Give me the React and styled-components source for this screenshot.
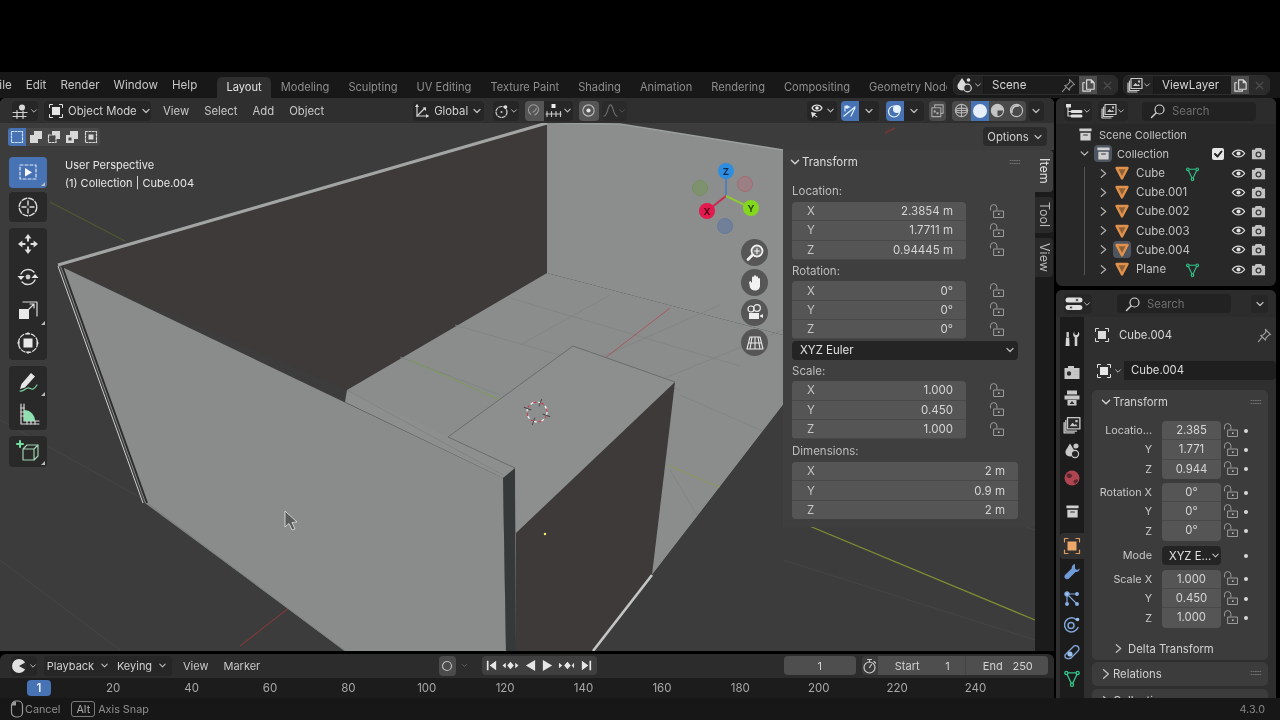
import React from "react";
import styled, { createGlobalStyle } from "styled-components";

const Global = createGlobalStyle`
  html, body { margin: 0; padding: 0; background: #000; overflow: hidden; }
  * { box-sizing: border-box; }
  #root { width: 1280px; height: 720px; }
`;

const Page = styled.div`
  width: 1280px; height: 720px; display: flex; flex-direction: column; background: #000;
  font-family: Inter, "Noto Sans", sans-serif; font-size: 11.3px; color: #c8c8c8;
  filter: blur(0.35px); overflow: hidden;
`;
const Letterbox = styled.div`height: 72px; flex: none; background: #000;`;

/* ---------- generic icon ---------- */
const Svg = styled.svg`
  width: ${p => p.$s || 16}px; height: ${p => p.$h || p.$s || 16}px; flex: none; display: block;
  fill: none; stroke: ${p => p.$c || "currentColor"}; stroke-width: ${p => p.$w || 1.2}; stroke-linecap: round; stroke-linejoin: round;
`;
const I = ({ s, h, c, w, vb = "0 0 16 16", children }) => <Svg $s={s} $h={h} $c={c} $w={w} viewBox={vb}>{children}</Svg>;
const F = p => <path fill={p.c || "currentColor"} stroke="none" {...p} />;

const Chevron = ({ s = 10, c = "#bdbdbd" }) => <I s={s} c={c} vb="0 0 10 10"><path d="M2 3.5l3 3 3-3" /></I>;
const ChevronR = ({ s = 10, c = "#a8a8a8" }) => <I s={s} c={c} vb="0 0 10 10"><path d="M3 1.5l4 3.5-4 3.5" /></I>;
const ViewportIco = () => <I s={18} c="#d0d0d0" vb="0 0 18 16"><circle cx="10" cy="4.4" r="3" fill="#d8d8d8" stroke="none" /><path d="M1 9.5h14M1 13.5h13M5 7.5v8M11 8v7.5" /></I>;
const ObjIco = ({ s = 16, c = "#e6e6e6" }) => <I s={s} c={c} w={1}><path d="M1.5 4.5v-3h3M11.5 1.5h3v3M14.5 11.5v3h-3M4.5 14.5h-3v-3" /><rect x="4" y="4" width="8" height="8" fill={c} stroke="none" /></I>;
const SelNew = () => <I s={14} c="#cfe0ff" vb="0 0 14 14"><rect x="1.5" y="1.5" width="11" height="11" strokeDasharray="2 1.4" /></I>;
const SelAdd = () => <I s={14} vb="0 0 14 14"><F d="M1 5h8v8H1zM5 1h8v8H5z" c="#d8d8d8" /></I>;
const SelSub = () => <I s={14} c="#d8d8d8" vb="0 0 14 14"><rect x="1.5" y="5" width="7.5" height="7.5" strokeDasharray="2 1.4" /><F d="M5 1h8v8H9V5H5z" c="#d8d8d8" /></I>;
const SelXor = () => <I s={14} c="#d8d8d8" vb="0 0 14 14"><F d="M5 1h8v8H9V5H5zM1 5h8v8H1V5zm2.5 2.5v3h3v-3z" c="#d8d8d8" /></I>;
const SelAnd = () => <I s={14} c="#d8d8d8" vb="0 0 14 14"><rect x="1.5" y="1.5" width="11" height="11" strokeDasharray="2 1.4" /><rect x="4.5" y="4.5" width="5" height="5" fill="#d8d8d8" stroke="none" /></I>;

const ToolSelect = () => <I s={24} c="#dfe8f6" vb="0 0 24 24"><rect x="4" y="5" width="16" height="14" strokeDasharray="3 2" /><F d="M9 8l7 4.5-7 4z" c="#fff" /></I>;
const ToolCursor = () => <I s={24} c="#dcdcdc" vb="0 0 24 24" w={1.4}><circle cx="12" cy="12" r="8.8" strokeDasharray="5 2" /><path d="M12 6v4M12 14v4M6 12h4M14 12h4" /></I>;
const ToolMove = () => <I s={24} vb="0 0 24 24"><F c="#e0e0e0" d="M12 2l3.4 4.4h-2.4v3h-2v-3H8.600zM12 22l3.4-4.400h-2.400v-3h-2v3H8.600zM2 12l4.400-3.400v2.400h3v2h-3v2.400zM22 12l-4.400-3.400v2.400h-3v2h3v2.400z" /></I>;
const ToolRotate = () => <I s={24} c="#dcdcdc" vb="0 0 24 24" w={1.4}><path d="M5 9a8 8 0 0 1 13-2M19 15a8 8 0 0 1-13 2" /><circle cx="12" cy="12" r="2.4" fill="#ccc" stroke="none" /><F c="#e6e6e6" d="M1.500 11l3.500 4 3.500-4zM15.500 13l3.500-4 3.500 4z" /></I>;
const ToolScale = () => <I s={24} c="#dcdcdc" vb="0 0 24 24"><path d="M7 4h14v14" /><rect x="3" y="11" width="10" height="10" fill="#e8e8e8" stroke="none" /><path d="M13 11l5-5M14 6h4v4" /></I>;
const ToolXform = () => <I s={24} c="#dcdcdc" vb="0 0 24 24" w={1.3}><circle cx="12" cy="12" r="9.500" strokeDasharray="4 2" /><rect x="7.500" y="7.500" width="9" height="9" fill="#e8e8e8" stroke="none" /><F c="#e0e0e0" d="M12 1l2 2.500h-4zM12 23l2-2.500h-4zM1 12l2.500 2v-4zM23 12l-2.500 2v-4z" /></I>;
const ToolAnnot = () => <I s={24} c="#e0e0e0" vb="0 0 24 24"><F c="#e6e6e6" d="M15 3l4 3.500-10 11-5 1.500 1.500-5z" /><path d="M4 21c4 1 6-4 9-3s4 3 8-3" stroke="#7ed9a5" /></I>;
const ToolMeasure = () => <I s={24} c="#d8d8d8" vb="0 0 24 24"><path d="M5 2v20h18" /><path d="M8 2v17h15" /><F c="#8fe2b0" d="M8 19V8a11 11 0 0 1 11 11z" /><path d="M11 19v3M15 19v3M19 19v3M5 6h3M5 10h3M5 14h3" /></I>;
const ToolAddCube = () => <I s={24} c="#9ecfb0" vb="0 0 24 24"><path d="M7 10h11v11H7zM7 10l4-4h11v11l-4 4M18 10l4-4" /><path d="M1 5h6M4 2v6" stroke="#74e0a0" strokeWidth="2" /></I>;

const Magnet = () => <I s={15} c="#9a9a9a"><path d="M4 12a5.500 5.500 0 1 1 8.400-5.600c.2 2-1.200 4.300-4 6.400M6.500 9.700c2.500-1.600 3.400-3 3.300-4" /></I>;
const Incr = () => <I s={18} h={16} c="#c8c8c8" vb="0 0 18 16"><rect x="6.500" y="1" width="4" height="4" fill="#eee" stroke="none" /><path d="M1 11h15M2 8.500v5M6.500 8.500v5M11 8.500v5M15.500 8.500v5" /></I>;
const PropDot = () => <I s={15} c="#b8b8b8"><circle cx="8" cy="8" r="6" /><circle cx="8" cy="8" r="2.200" fill="#e6e6e6" stroke="none" /></I>;
const Falloff = () => <I s={15} c="#6e6e6e"><path d="M1 14c4 0 4-12 7-12s3 12 7 12" /></I>;
const GlobalIco = () => <I s={16} c="#d0d0d0"><path d="M3 2v11h11" /><path d="M3 13l8-8" /><F c="#d8d8d8" d="M1 4l2-3 2 3zM12 11l3 2-3 2zM8.500 4.500h3.500v3.500z" /></I>;
const PivotIco = () => <I s={16} c="#d0d0d0"><circle cx="7.500" cy="9" r="5.500" strokeDasharray="3 1.500" /><circle cx="11.500" cy="4" r="1.800" fill="#e0e0e0" stroke="none" /><circle cx="7.500" cy="9" r="1" fill="#d0d0d0" stroke="none" /></I>;
const EyeCursor = () => <I s={18} c="#e2e2e2" vb="0 0 18 16"><path d="M4 5c2-4 8-4 10 0-2 4-8 4-10 0z" /><circle cx="9" cy="5" r="1.800" fill="#eee" stroke="none" /><F c="#e2e2e2" d="M3 9l1.500 6 1.500-2.500 3 2 .5-.800-3-2 2-1.500z" /></I>;
const GizmoBtn = () => <I s={16} c="#dff0ff" vb="0 0 16 16"><path d="M2 13L13 4M4 4h4M3 3v5M9 13l4-8" /><circle cx="5" cy="4" r="1.800" fill="#dff0ff" stroke="none" /></I>;
const OverlayBtn = () => <I s={16} c="#e6f2ff"><circle cx="7" cy="8.500" r="5.500" /><circle cx="10" cy="6" r="4" fill="#e6f2ff" stroke="none" /></I>;
const Xray = () => <I s={15} c="#a8a8a8"><rect x="2" y="5" width="9.500" height="9.500" /><path d="M5 5V2h9v9h-2.500" /><circle cx="5" cy="9" r=".7" fill="#aaa" /><circle cx="8" cy="11" r=".7" fill="#aaa" /></I>;
const ShadeWire = () => <I s={15} c="#b4b4b4"><circle cx="8" cy="8" r="6.500" /><ellipse cx="8" cy="8" rx="6.500" ry="2.500" /><path d="M8 1.500v13M1.500 8h13" /></I>;
const ShadeSolid = () => <I s={16}><circle cx="8" cy="8" r="7" fill="#e6eefa" stroke="none" /></I>;
const ShadeMat = () => <I s={15} c="#c4c4c4"><circle cx="8" cy="8" r="6.500" /><F c="#c4c4c4" d="M8 1.500a6.500 6.500 0 0 0 0 13V8h6.500A6.500 6.500 0 0 0 8 1.500z" /></I>;
const ShadeRender = () => <I s={15} c="#c4c4c4"><circle cx="8" cy="8" r="6.500" /><path d="M3 10a6 6 0 0 1 7-7" strokeWidth="2" /></I>;

const Tree = () => <I s={18} c="#cfcfcf" vb="0 0 18 16"><rect x="1" y="1" width="5" height="3.500" fill="#e0e0e0" stroke="none" /><path d="M3 4.500v8.500h3M3 8.500h3" /><path d="M7 8.500h9M7 13h9" strokeWidth="3" stroke="#e0e0e0" /></I>;
const ViewLayerIco = ({ s = 16, c = "#c8c8c8" }) => <I s={s} c={c}><rect x="4" y="1.500" width="11" height="10" fill="#2a2a2a" /><path d="M2.500 4v9.500H12M1 6v9h9" /><F c={c} d="M6 9l2.500-3 2 2 1-1 1.500 2zM11 3.500h2v2h-2z" /></I>;
const SceneIco = () => <I s={18} c="#d8d8d8" vb="0 0 18 16"><F c="#dadada" d="M6 1l4 6a4.500 4.500 0 1 1-8 0z" /><circle cx="12.500" cy="3" r="1.800" fill="#dadada" stroke="none" /><circle cx="11.500" cy="11" r="3.800" fill="#2a2a2a" /></I>;
const Pin = ({ c = "#8c8c8c" }) => <I s={15} c={c}><path d="M9 1.500l5.500 5.500-2 .5-3 3-.5 2.500-5-5 2.500-.5 3-3zM5 10.500L1.500 14.500" /></I>;
const CopyIco = () => <I s={15} c="#dcdcdc"><path d="M6 2h5l3 3v7H6zM11 2v3h3M4 5H2v9h8v-1" /></I>;
const XIco = () => <I s={11} c="#4c4c4c" vb="0 0 10 10"><path d="M2 2l6 6M8 2l-6 6" /></I>;
const Search = () => <I s={16} c="#d2d2d2"><circle cx="9.500" cy="6.500" r="4.500" /><path d="M6 10l-4.500 4.500" strokeWidth="1.500" /></I>;
const CollIco = ({ c = "#d0d0d0" }) => <I s={15}><F c={c} d="M1.500 1.500h13v3h-13zM2.500 6h11v8.500h-11z" /><path d="M6 8.500h4" stroke="#333" strokeWidth="1.200" /></I>;
const MeshObj = () => <I s={16} c="#e0914c" w={2.4}><path d="M2.500 3h11L8 13.500z" fill="#8f6036" /></I>;
const MeshData = ({ s = 15 }) => <I s={s} c="#31c58a"><path d="M3 3.500h10L8 14zM5 7.500M3 3.500L8 14" /><circle cx="3" cy="3.500" r="1.400" fill="#1c1c1c" /><circle cx="13" cy="3.500" r="1.400" fill="#1c1c1c" /><circle cx="8" cy="14" r="1.400" fill="#1c1c1c" /></I>;
const Eye = () => <I s={15} c="#dcdcdc" w={1.400}><path d="M1.500 8c3-4.800 10-4.800 13 0-3 4.800-10 4.800-13 0z" /><circle cx="8" cy="8" r="2.200" fill="#e0e0e0" stroke="none" /></I>;
const Cam = () => <I s={15} vb="0 0 16 16"><F c="#c2c2c2" d="M1 4h3l1-2h6l1 2h3v10H1z" /><circle cx="8" cy="9" r="3.200" fill="#3a3a3a" stroke="none" /><circle cx="8" cy="9" r="1.800" fill="#c8c8c8" stroke="none" /></I>;
const Lock = () => <I s={16} c="#9b9b9b" vb="0 0 16 16" w={1}><path d="M1.500 6V3.800a3.200 3.200 0 0 1 6.400 0V6" /><rect x="5" y="7" width="9.500" height="6.500" fill="#3f3f3f" /><circle cx="9.800" cy="10.200" r=".9" fill="#bbb" stroke="none" /></I>;
const Grip = () => <I s={12} h={7} c="#6f6f6f" vb="0 0 12 7" w={1}><path d="M1 1.500h10M1 4.500h10" strokeDasharray="1 1.200" /></I>;
const Clock = () => <I s={18} vb="0 0 18 16"><circle cx="8" cy="8" r="7" fill="#e0e0e0" stroke="none" /><F c="#2c2c2c" d="M8 8l7-4v8z" /></I>;
const Stopwatch = () => <I s={16} c="#c8c8c8"><circle cx="7.500" cy="9.500" r="5.500" /><path d="M5.500 1.500h4M7.500 2v2M12 3.500l1.500 1.500M7.500 9.500l2-3" /></I>;

const Nav1 = () => <I s={20} c="#f0f0f0" vb="0 0 20 20"><circle cx="12" cy="8" r="5.500" fill="#fff" fillOpacity=".18" strokeWidth="1.800" /><path d="M12 5.500v5M9.500 8h5" /><path d="M7.500 12L3 16.500" strokeWidth="2.800" /></I>;
const Nav2 = () => <I s={20} vb="0 0 20 20"><F c="#f2f2f2" d="M4 9l1.500-1L7 10V4.500a1 1 0 0 1 2 0V3.300a1 1 0 0 1 2 0v1a1 1 0 0 1 2 0V6a1 1 0 0 1 2 0v6.500c0 3-2 5-5 5-2.500 0-4-1-5-3z" /></I>;
const Nav3 = () => <I s={20} c="#eee" vb="0 0 20 20"><circle cx="6" cy="6" r="3" /><circle cx="12" cy="5" r="3.300" /><rect x="4" y="10" width="10" height="6" fill="#eee" stroke="none" /><F c="#eee" d="M15 12.500l3-1.500v4l-3-1.500z" /></I>;
const Nav4 = () => <I s={20} c="#eaeaea" vb="0 0 20 20" w={1.1}><path d="M5 4h10l3 12H2zM3.500 10h13M10 4v12M7 4l-2 12M13 4l2 12" /></I>;

const PropTool = () => <I s={18} c="#cfcfcf" vb="0 0 18 18"><F c="#cfcfcf" d="M11.500 1.500c-.5 1.500-.5 2.500 1 3.300.5.300 1 .3 1.500 0 1.200-.8 1.300-2 .8-3.300 1.700 1 2 3 1 4.500-.4.600-1 1-1.500 1.200V16h-2.600V7.200c-1.600-.8-2.200-4-.2-5.700z" /><F c="#c8c8c8" d="M3.500 2h2.400v5H3.500z" /><F c="#d8d8d8" d="M3 7.500h3.200l.4 8.500H2.600z" /></I>;
const PropRender = () => <I s={18} vb="0 0 18 18"><F c="#c8c8c8" d="M1.500 5h15v11h-15zM5 3h6v2H5z" /><circle cx="6" cy="10.500" r="2.800" fill="#2a2a2a" /><rect x="11" y="7" width="4" height="1.200" fill="#2a2a2a" /><rect x="11" y="10" width="4" height="1.200" fill="#2a2a2a" /></I>;
const PropOutput = () => <I s={18} vb="0 0 18 18"><F c="#c8c8c8" d="M4 1.500h10v4H4zM1.500 6.500h15v4H1.500z" /><F c="#c8c8c8" d="M4.500 11h9v5.500h-9z" /><F c="#2a2a2a" d="M6.500 15l2.500-3 2.500 3z" /></I>;
const PropLayer = () => <ViewLayerIco s={18} c="#c8c8c8" />;
const PropScene = () => <I s={18} vb="0 0 18 18"><F c="#c8c8c8" d="M7 1.500l4 6.500a4.500 4.500 0 1 1-8 0z" /><circle cx="13" cy="4" r="2" fill="#c8c8c8" /><circle cx="12" cy="12" r="3.600" fill="#232323" stroke="#c8c8c8" /></I>;
const PropWorld = () => <I s={18} vb="0 0 18 18"><circle cx="9" cy="9" r="7.500" fill="#b04552" stroke="none" /><F c="#5c2730" d="M4 5c2-1 4 0 5 1s-1 3-3 3-3-2-2-4zM10 12l4-2 1 2-3 3z" /></I>;
const PropColl = () => <CollIco c="#d0d0d0" />;
const PropObj = () => <I s={18} c="#e09a5c" w={1.2} vb="0 0 18 18"><path d="M1.500 5v-3.500h3.500M13 1.500h3.500V5M16.500 13v3.500H13M5 16.500H1.500V13" /><rect x="4.500" y="4.500" width="9" height="9" fill="#eca76a" stroke="none" /></I>;
const PropMod = () => <I s={18} vb="0 0 18 18"><F c="#6f9bd8" d="M12 1c-2 .5-3.500 2-3.300 4.500L2 12c-1 1-1 3 1 4 1 .5 2 .3 3-.5L12.500 9c2.500.5 4-1.500 4.500-3.500l-3 1.500-2-1.500z" /></I>;
const PropPart = () => <I s={18} c="#7ea4d8" vb="0 0 18 18"><path d="M4 4l10 10M4 4v10M4 4h10" /><circle cx="4" cy="4" r="2.200" fill="#9cc0ee" /><circle cx="14" cy="14" r="1.400" fill="#9cc0ee" /><circle cx="4" cy="14" r="1.400" fill="#9cc0ee" /><circle cx="14" cy="4" r="1.400" fill="#9cc0ee" /></I>;
const PropPhys = () => <I s={18} c="#7ea4d8" w={1.5} vb="0 0 18 18"><path d="M13 3.500a7 7 0 1 0 2 8" /><circle cx="8" cy="9.500" r="3" fill="none" /><circle cx="14.500" cy="3.500" r="1.800" fill="#9cc0ee" stroke="none" /></I>;
const PropCons = () => <I s={18} c="#7ea4d8" w={1.400} vb="0 0 18 18"><path d="M2 12l9-9c2-1 5 0 5 3 0 1-1 2-2 3l-6 6c-2 1-5 1-6-1z" /><circle cx="7" cy="11" r="2.600" fill="#9cc0ee" stroke="none" /></I>;
const PropData = () => <MeshData s={18} />;

/* ---------- top bar ---------- */
const TopBar = styled.header`height: 26px; flex: none; display: flex; background: #181818; overflow: hidden;`;
const MenuBar = styled.nav`width: 217px; flex: none; display: flex; align-items: center; padding-bottom: 1px; overflow: hidden; font-size: 11.6px; color: #c6c6c6;`;
const MenuItem = styled.span`padding: 0 7px; white-space: nowrap; &:first-child { margin-left: -14.500px; }`;
const Tabs = styled.div`width: 730px; flex: none; display: flex; align-items: flex-end; overflow: hidden; height: 26px; color: #8d8d8d; font-size: 11.100px;`;
const WsTab = styled.div`
  height: 21px; line-height: 21px; padding: 0 9.500px; white-space: nowrap; border-radius: 5px 5px 0 0; flex: none;
  background: ${p => p.$on ? "#2f2f2f" : "transparent"}; color: ${p => p.$on ? "#e2e2e2" : "inherit"};
  &:last-child { flex: 0 1 auto; min-width: 0; overflow: hidden; padding-right: 0; }
`;
const Selector = styled.div`
  width: ${p => p.$w}px; height: 20px; margin: 3px 0 0 ${p => p.$ml}px; display: flex; align-items: center; flex: none;
  background: #242424; border-radius: 6px; border: 1px solid #2e2e2e;
`;
const SelIcon = styled.div`width: 30px; height: 100%; display: flex; align-items: center; justify-content: center; border-right: 1px solid #181818;`;
const SelName = styled.div`flex: 1; display: flex; align-items: center; height: 100%; padding-left: 8px; color: #d4d4d4; background: #1c1c1c; font-size: 11.6px;`;
const SelPin = styled.div`margin-left: auto; margin-right: 3px; display: flex;`;
const SelBtn = styled.div`width: 18px; height: 100%; display: flex; align-items: center; justify-content: center; background: ${p => p.$on ? "#4e4e4e" : "transparent"};`;
const SelX = styled(SelBtn)`width: 20px; background: #2b2b2b; border-radius: 0 6px 6px 0;`;

/* ---------- main ---------- */
const Main = styled.main`height: 600px; flex: none; display: flex;`;
const LeftCol = styled.div`width: 1054px; flex: none; display: flex; flex-direction: column;`;
const RightCol = styled.div`width: 224px; margin-left: 2px; flex: none; display: flex; flex-direction: column;`;

const Viewport = styled.section`position: relative; height: 553px; flex: none; overflow: hidden; background: #3c3c3c; border-radius: 6px 6px 0 0; display: flex; flex-direction: column;`;
const SceneSvg = styled.svg`position: absolute; left: 0; top: 0; width: 1054px; height: 553px;`;
const ViewHeader = styled.div`position: relative; height: 25px; flex: none; display: flex; align-items: center; padding-left: 12px; background: #2f2f2f;`;
const HBtn = styled.div`
  width: ${p => p.$w}px; height: ${p => p.$h || 20}px; margin-left: ${p => p.$ml || 0}px; flex: none; white-space: nowrap;
  display: flex; align-items: center; justify-content: ${p => p.$start ? "flex-start" : "center"}; gap: ${p => p.$gap || 0}px;
  padding-left: ${p => p.$pl || 0}px;
  border-radius: ${p => p.$r ?? "4px"};
  background: ${p => p.$bg || "#262626"}; color: #d0d0d0;
`;
const HMenu = styled.span`padding: 0 7.5px; margin-left: ${p => p.$ml || 0}px; flex: none; color: #c8c8c8;`;
const ToolRow = styled.div`position: relative; height: 27px; flex: none; display: flex; align-items: center; justify-content: space-between; padding: 0 7px 0 8px;`;
const SetGroup = styled.div`display: flex; height: 18px; border-radius: 3px; overflow: hidden; background: #484848;`;
const SetBtn = styled.div`width: 18.4px; display: flex; align-items: center; justify-content: center; background: ${p => p.$on ? "#4772b3" : "transparent"};`;
const Options = styled.div`width: 64px; height: 19px; display: flex; align-items: center; justify-content: center; gap: 4px; background: #2b2b2b; border-radius: 4px; color: #d0d0d0;`;

const Body = styled.div`position: relative; flex: 1; display: flex; min-height: 0;`;
const Toolbar = styled.div`width: 38px; margin: 6.500px 0 0 9px; flex: none; display: flex; flex-direction: column; gap: 6px;`;
const ToolGroup = styled.div`display: flex; flex-direction: column; gap: ${p => p.$gap || 0}px;`;
const ToolBtn = styled.div`
  height: ${p => p.$h}px; display: flex; align-items: center; justify-content: center; position: relative;
  border-radius: ${p => p.$r || "0"}; background: ${p => p.$on ? "#4772b3" : "#292929"};
  ${p => p.$corner ? `&::after { content: ""; position: absolute; right: 2px; bottom: 2px; border: 2px solid transparent; border-right-color: #bbb; border-bottom-color: #bbb; }` : ""}
`;
const Info = styled.div`margin: 6px 0 0 18px; flex: 1; line-height: 18px; color: #e8e8e8; font-size: 11px;`;
const OverlayCol = styled.div`width: 90px; flex: none; display: flex; flex-direction: column; align-items: flex-end; padding: 5px 15px 0 0; gap: 3px;`;
const GizmoSvg = styled.svg`width: 80px; height: 81px; margin-right: -2px; flex: none;`;
const GizmoText = styled.text`font: 700 9.5px Inter, sans-serif; text-anchor: middle; fill: ${p => p.$f};`;
const NavBtn = styled.div`width: 27px; height: 27px; flex: none; border-radius: 50%; display: flex; align-items: center; justify-content: center; background: rgba(72,72,72,.8);`;

const Sidebar = styled.aside`width: 252px; height: 377px; flex: none; background: #3f3f3f; padding: 0 17px 0 9px; display: flex; flex-direction: column; font-size: 11.5px;`;
const SideHead = styled.div`height: 24px; flex: none; display: flex; align-items: center; gap: 1px; margin-left: -3px; color: #dcdcdc;`;
const GripWrap = styled.div`margin-left: auto; margin-right: ${p => p.$mr ?? -3}px; display: flex;`;
const SideLabel = styled.div`height: 19px; line-height: 19px; flex: none; margin-top: ${p => p.$mt || 0}px; color: #bdbdbd;`;
const Vec = styled.div`display: flex; flex: none; margin-top: ${p => p.$mt || 1}px;`;
const FieldStack = styled.div`width: ${p => p.$w}px; flex: none; border-radius: 4px; overflow: hidden; display: flex; flex-direction: column; gap: 1px; background: #484848;`;
const Field = styled.div`height: 18.300px; flex: none; display: flex; align-items: center; justify-content: space-between; padding: 0 13px 0 15px; background: #555; color: #d4d4d4;`;
const Axis = styled.span`color: #c4c4c4;`;
const LockCol = styled.div`width: 52px; flex: none; display: flex; flex-direction: column; align-items: center;`;
const LockCell = styled.div`height: 19.300px; display: flex; align-items: center; justify-content: center; padding-left: 9px;`;
const Dropdown = styled.div`
  height: 19px; flex: none; margin-top: 1.500px; display: flex; align-items: center; justify-content: space-between; padding: 0 3px 0 8px;
  background: #242424; border-radius: 4px; color: #e0e0e0;
`;
const SideTabs = styled.div`width: 19px; flex: none; align-self: stretch; background: #1b1b1b; display: flex; flex-direction: column;`;
const SideTab = styled.div`
  height: ${p => p.$h}px; margin-top: ${p => p.$mt || 0}px; width: 18px; flex: none; display: flex; align-items: center; justify-content: center;
  writing-mode: vertical-rl; font-size: 12.500px; border-radius: 0 4px 4px 0;
  background: ${p => p.$on ? "#3f3f3f" : "#2a2a2a"}; color: ${p => p.$on ? "#e6e6e6" : "#bbb"};
`;

/* ---------- timeline ---------- */
const Timeline = styled.section`height: 44px; margin-top: 3px; flex: none; display: flex; flex-direction: column; border-radius: 6px 6px 0 0; overflow: hidden; font-size: 11px;`;
const TimeHead = styled.div`height: 24px; flex: none; display: flex; align-items: center; background: #2c2c2c; padding: 0 0 1px 11px;`;
const Ruler = styled.div`height: 20px; flex: none; display: flex; align-items: center; background: #1c1c1c; color: #a8a8a8; font-size: 11.500px;`;
const FrameBadge = styled.div`width: 24px; height: 16px; margin: 0 23px 0 27px; flex: none; border-radius: 4px; background: #4772b3; color: #e8eeff; text-align: center; line-height: 16px; font-weight: 600;`;
const Tick = styled.div`width: 78.400px; flex: none; text-align: center;`;
const Transport = styled.div`width: 115px; height: 19px; margin-left: ${p => p.$ml}px; flex: none; background: #3f3f3f; border-radius: 4px; display: flex; align-items: center; justify-content: space-between; padding: 0 4px 0 3px;`;
const Seg = styled.div`
  height: 19px; width: ${p => p.$w}px; margin-left: ${p => p.$ml || 0}px; flex: none; display: flex; align-items: center;
  justify-content: ${p => p.$sb ? "space-between" : "center"}; padding: ${p => p.$sb ? "0 15px 0 17px" : "0"};
  background: ${p => p.$bg || "#4e4e4e"}; color: #d2d2d2; border-radius: ${p => p.$r || "4px"};
  border-left: ${p => p.$sep ? "1px solid #444" : "none"};
`;

/* ---------- outliner ---------- */
const Outliner = styled.section`margin: 0 4px 0 0; height: 188px; flex: none; background: #282828; border-radius: 6px; overflow: hidden; display: flex; flex-direction: column;`;
const OutHead = styled.div`height: 26px; flex: none; display: flex; align-items: center; padding-left: 8px; background: #2c2c2c;`;
const SearchBox = styled.div`width: ${p => p.$w}px; height: 19px; margin-left: ${p => p.$ml}px; display: flex; align-items: center; gap: 6px; padding-left: 8px; background: #222; border-radius: 4px; color: #6e6e6e; flex: none;`;
const OutList = styled.div`position: relative; display: flex; flex-direction: column; padding-top: 1px;`;
const OutRow = styled.div`position: relative; height: 19.220px; flex: none; display: flex; align-items: center; padding-left: ${p => p.$pl}px; color: #c4c4c4; font-size: ${p => p.$fs || 11.5}px;`;
const RowIcon = styled.span`
  width: 18px; height: 17px; margin: 0 5px 0 ${p => p.$ml || 0}px; flex: none; display: flex; align-items: center; justify-content: center;
  border-radius: 4px; background: ${p => p.$on ? "#4d5560" : "transparent"};
`;
const RowName = styled.span`flex: none; color: ${p => p.$c || "#c2c2c2"};`;
const DataSlot = styled.span`position: absolute; left: 129px; display: flex;`;
const RowEnd = styled.span`margin-left: auto; padding-right: 10px; display: flex; align-items: center; gap: 5px;`;
const Check = styled.span`width: 12px; height: 12px; margin-right: 2px; border-radius: 2px; background: #e6e6e6; display: flex; align-items: center; justify-content: center;`;
const TreeLine = styled.span`position: absolute; left: 28px; top: 43px; height: 108px; width: 1px; background: #555;`;

/* ---------- properties ---------- */
const Props = styled.section`margin-top: 4px; margin-right: 4px; flex: 1; min-height: 0; display: flex; flex-direction: column; background: #2f2f2f; border-radius: 6px 6px 0 0; overflow: hidden;`;
const PropHead = styled.div`height: 27px; flex: none; display: flex; align-items: center; padding-left: 8px; background: #2c2c2c;`;
const PropBody = styled.div`flex: 1; min-height: 0; display: flex;`;
const PropTabs = styled.div`width: 24px; margin-left: 4px; flex: none; background: #1c1c1c; padding-top: 8.500px; display: flex; flex-direction: column;`;
const PropTab = styled.div`
  height: 26.500px; flex: none; margin-top: ${p => p.$mt || 0}px; display: flex; align-items: center; justify-content: center;
  background: ${p => p.$on ? "#303030" : "transparent"}; border-radius: 4px 0 0 4px;
`;
const PropMain = styled.div`flex: 1; min-width: 0; display: flex; flex-direction: column; padding: 6px 0 0 8px; overflow: hidden;`;
const Crumb = styled.div`height: 24px; flex: none; display: flex; align-items: center; gap: 9px; padding: 0 4px 0 2px; color: #d6d6d6;`;
const PinEnd = styled.span`margin-left: auto;`;
const NameRow = styled.div`height: 19px; flex: none; margin: 14px 0 0 4px; display: flex; align-items: center; gap: 2px;`;
const NameInput = styled.div`flex: 1; height: 19px; line-height: 19px; padding-left: 7px; background: #1f1f1f; border-radius: 0 4px 4px 0; color: #dcdcdc;`;
const Panel = styled.div`flex: none; width: 176px; margin-top: ${p => p.$mt || 0}px; background: #3c3c3c; border-radius: 5px;`;
const PanelHead = styled.div`height: 24px; display: flex; align-items: center; gap: 1px; padding: 0 6px 0 8px; color: #d2d2d2;`;
const PRow = styled.div`height: ${p => p.$h || 19.3}px; margin-top: ${p => p.$mt || 0}px; display: flex; align-items: center;`;
const PLabel = styled.div`width: 60px; flex: none; text-align: right; color: #c8c8c8; white-space: nowrap; font-size: 10.800px;`;
const PField = styled.div`
  width: 59px; height: 100%; margin-left: 10px; flex: none; text-align: center; line-height: 19px; background: #555; color: #d6d6d6;
  border-bottom: ${p => p.$last ? "none" : "1px solid #484848"};
  border-radius: ${p => p.$first ? "4px 4px 0 0" : p.$last ? "0 0 4px 4px" : "0"};
`;
const PSelect = styled.div`
  width: 59px; height: 100%; margin-left: 10px; flex: none; display: flex; align-items: center; justify-content: space-between; padding: 0 2px 0 7px;
  background: #242424; border-radius: 4px; color: #e0e0e0; white-space: nowrap; overflow: hidden;
`;
const PLock = styled.div`width: 20px; flex: none; display: flex; justify-content: center;`;
const Dot = styled.div`width: 9px; flex: none; height: 4px; display: flex; justify-content: center; &::after { content: ""; width: 4px; height: 4px; border-radius: 50%; background: #d8d8d8; }`;
const SubHead = styled.div`height: 22px; margin-top: 10px; display: flex; align-items: center; gap: 4px; padding-left: 21px; color: #d2d2d2;`;

/* ---------- status ---------- */
const Status = styled.footer`height: 22px; flex: none; display: flex; align-items: center; padding: 0 15px 0 10px; background: #171717; color: #8f8f8f; font-size: 10.800px;`;
const Cancel = styled.span`margin-left: 1px;`;
const KeyBox = styled.span`height: 16px; padding: 0 4px; margin: 0 3px 0 11px; display: inline-flex; align-items: center; border: 1px solid #7a7a7a; border-radius: 3px; color: #aaa;`;
const Version = styled.span`margin-left: auto; color: #868686;`;

const Scene = () => (
  <SceneSvg viewBox="0 98 1054 553">
    <rect x="0" y="98" width="1054" height="553" fill="#3c3c3c" />
    <g stroke="#454545" strokeWidth="1" fill="none">
      <path d="M0 420L145 500M160 515L345 620M0 560L120 650M783 560L1035 640M800 450L1035 530" />
    </g>
    <path d="M50 202L125 241" stroke="#4c5a33" strokeWidth="1.200" />
    <path d="M290 607L240 646" stroke="#7a3a3a" strokeWidth="1.200" />
    <path d="M783 515L1035 620" stroke="#7d8f32" strokeWidth="1.300" />
    <path d="M885 133L895 128" stroke="#6a3a3a" strokeWidth="2" />

    <polygon points="60,266 547,124 547,275 347,390" fill="#3d3a39" />
    <polygon points="547,124 620,124 783,150 783,335 547,273" fill="#8b8e8d" />
    <polygon points="347,390 547,273 783,335 783,405 652,575 593,651 506,651 503,478" fill="#8a8d8c" />

    <g stroke="#7f8382" strokeWidth=".8" fill="none">
      <path d="M400 357L500 395M455 325L680 390M510 298L740 366M520 345L610 295M595 360L720 305M660 380L783 330" />
      <path d="M680 395L783 440M670 470L700 520" />
    </g>
    <path d="M410 360L500 400" stroke="#7f9a55" strokeWidth="1" />
    <path d="M605 358L670 308" stroke="#a85960" strokeWidth="1" />
    <path d="M668 465L783 515" stroke="#8a9a55" strokeWidth="1" />

    <polygon points="60,266 503,478 506,651 345,651 145,503" fill="#898c8b" />
    <polygon points="347,390 515,468 503,478 345,402" fill="#8c8f8e" />
    <path d="M347 390L503 475" stroke="#7a7e7d" strokeWidth=".7" fill="none" />
    <path d="M58 266L143 503" stroke="#cfd2d1" strokeWidth="1" />
    <path d="M62 266L147 503" stroke="#2e2d2d" strokeWidth="2" />
    <path d="M147 503L345 651" stroke="#7b7f7e" strokeWidth="1" />
    <path d="M58 265L547 123" stroke="#a2a5a4" strokeWidth="3.200" />
    <path d="M547 123L620 124L783 150" stroke="#9b9f9e" strokeWidth="1.500" fill="none" />

    <polygon points="503,478 515,468 516,651 506,651" fill="#35393a" />
    <polygon points="448,437 573,346 675,382 516,533 515,468" fill="#8c8f8e" />
    <path d="M448,437L573,346L675,382M448 437L515 468" stroke="#66696a" strokeWidth=".9" fill="none" />
    <polygon points="675,382 652,575 593,651 516,651 516,533" fill="#3d3a39" />
    <polygon points="593,651 652,575 783,405 783,651" fill="#3c3c3c" />
    <path d="M593 651L652 575" stroke="#c4c6c5" strokeWidth="2.600" />
    <circle cx="545" cy="534" r="1.200" fill="#f4f06a" />

    <g transform="translate(537 412)" fill="none">
      <circle r="10" stroke="#f0f0f0" strokeWidth="1.300" strokeDasharray="5 3" />
      <circle r="10" stroke="#c23a4e" strokeWidth="1.300" strokeDasharray="3 5" strokeDashoffset="5" />
      <path d="M0-14V-6M0 6V14M-14 0H-6M6 0H14" stroke="#4a4a4a" strokeWidth="1" transform="rotate(20)" />
    </g>
    <path d="M285 511V527L289 523.500L292 530L295 529L292 522.500L297 522Z" fill="#5a5c5c" stroke="#d8d8d8" strokeWidth=".9" />
  </SceneSvg>
);

const Gizmo = () => (
  <GizmoSvg viewBox="690 155 80 81">
    <path d="M726 196V178" stroke="#3f78c9" strokeWidth="1.500" />
    <path d="M726 196L707 211" stroke="#c92a52" strokeWidth="2" />
    <path d="M726 196L751 208" stroke="#90c838" strokeWidth="2" />
    <circle cx="700" cy="188" r="7.500" fill="#7f9270" stroke="#76905c" />
    <circle cx="745" cy="184" r="7.500" fill="#9c7f84" stroke="#a06c74" />
    <circle cx="725" cy="226" r="7.500" fill="#717f98" stroke="#647aa0" />
    <circle cx="726" cy="171" r="8" fill="#2f8de0" />
    <GizmoText x="726" y="174.500" $f="#0d2c50">Z</GizmoText>
    <circle cx="707" cy="211" r="8" fill="#e4194e" />
    <GizmoText x="707" y="214.500" $f="#4d0718">X</GizmoText>
    <circle cx="751" cy="208" r="8" fill="#83d81e" />
    <GizmoText x="751" y="211.500" $f="#294a08">Y</GizmoText>
  </GizmoSvg>
);

const locks = [0, 1, 2];
const Vector = ({ rows, w = 174, lock = true, mt }) => (
  <Vec $mt={mt}>
    <FieldStack $w={w}>
      {rows.map(([a, v]) => <Field key={a}><Axis>{a}</Axis><span>{v}</span></Field>)}
    </FieldStack>
    {lock && <LockCol>{locks.map(i => <LockCell key={i}><Lock /></LockCell>)}</LockCol>}
  </Vec>
);

const objects = [
  { n: "Cube", d: true }, { n: "Cube.001" }, { n: "Cube.002" }, { n: "Cube.003" }, { n: "Cube.004", on: true }, { n: "Plane", d: true },
];
const EyeCam = () => <><Eye /><Cam /></>;

const propTabs = [
  [PropTool, 0], [PropRender, 6.5], [PropOutput], [PropLayer], [PropScene], [PropWorld],
  [PropColl, 7.5], [PropObj, 7.5, true], [PropMod], [PropPart], [PropPhys], [PropCons], [PropData],
];

const VRow = ({ label, value, first, last, mt }) => (
  <PRow $mt={mt}>
    <PLabel>{label}</PLabel>
    <PField $first={first} $last={last}>{value}</PField>
    <PLock><Lock /></PLock>
    <Dot />
  </PRow>
);

const ticks = [20, 40, 60, 80, 100, 120, 140, 160, 180, 200, 220, 240];

export default function App() {
  return (
    <Page>
      <Global />
      <Letterbox />
      <TopBar>
        <MenuBar>{["File", "Edit", "Render", "Window", "Help"].map(m => <MenuItem key={m}>{m}</MenuItem>)}</MenuBar>
        <Tabs>
          {["Layout", "Modeling", "Sculpting", "UV Editing", "Texture Paint", "Shading", "Animation", "Rendering", "Compositing", "Geometry Nodes"].map((t, i) => (
            <WsTab key={t} $on={i === 0}>{t}</WsTab>
          ))}
        </Tabs>
        <Selector $w={165} $ml={6}>
          <SelIcon><SceneIco /><Chevron s={8} /></SelIcon>
          <SelName>Scene<SelPin><Pin /></SelPin></SelName>
          <SelBtn $on><CopyIco /></SelBtn>
          <SelX><XIco /></SelX>
        </Selector>
        <Selector $w={147} $ml={5}>
          <SelIcon><ViewLayerIco /><Chevron s={8} /></SelIcon>
          <SelName>ViewLayer</SelName>
          <SelBtn $on><CopyIco /></SelBtn>
          <SelX><XIco /></SelX>
        </Selector>
      </TopBar>

      <Main>
        <LeftCol>
          <Viewport>
            <Scene />
            <ViewHeader>
              <HBtn $w={26}><ViewportIco /><Chevron s={8} /></HBtn>
              <HBtn $w={107} $ml={6} $start $pl={4} $gap={4}><ObjIco />Object Mode<Chevron /></HBtn>
              <HMenu $ml={4.5}>View</HMenu>
              <HMenu>Select</HMenu>
              <HMenu>Add</HMenu>
              <HMenu>Object</HMenu>
              <HBtn $w={71} $ml={81} $gap={4}><GlobalIco />Global<Chevron /></HBtn>
              <HBtn $w={26} $ml={9}><PivotIco /><Chevron s={8} /></HBtn>
              <HBtn $w={19} $ml={6} $bg="#555" $r="4px 0 0 4px"><Magnet /></HBtn>
              <HBtn $w={29} $r="0 4px 4px 0"><Incr /><Chevron s={9} /></HBtn>
              <HBtn $w={20} $ml={6} $bg="#555"><PropDot /></HBtn>
              <HBtn $w={25} $ml={3} $bg="#2a2a2a"><Falloff /><Chevron s={8} c="#555" /></HBtn>
              <HBtn $w={30} $ml={180}><EyeCursor /><Chevron s={9} /></HBtn>
              <HBtn $w={18} $ml={4} $bg="#4772b3" $r="4px 0 0 4px"><GizmoBtn /></HBtn>
              <HBtn $w={20} $r="0 4px 4px 0"><Chevron /></HBtn>
              <HBtn $w={18} $ml={7} $bg="#4772b3" $r="4px 0 0 4px"><OverlayBtn /></HBtn>
              <HBtn $w={20} $r="0 4px 4px 0"><Chevron /></HBtn>
              <HBtn $w={17} $ml={5} $bg="#4a4a4a"><Xray /></HBtn>
              <HBtn $w={19} $ml={6} $bg="#4a4a4a" $r="4px 0 0 4px"><ShadeWire /></HBtn>
              <HBtn $w={18} $bg="#4772b3" $r="0"><ShadeSolid /></HBtn>
              <HBtn $w={18} $bg="#4a4a4a" $r="0"><ShadeMat /></HBtn>
              <HBtn $w={19} $bg="#4a4a4a" $r="0 4px 4px 0"><ShadeRender /></HBtn>
              <HBtn $w={15} $ml={3}><Chevron /></HBtn>
            </ViewHeader>
            <ToolRow>
              <SetGroup>
                <SetBtn $on><SelNew /></SetBtn><SetBtn><SelAdd /></SetBtn><SetBtn><SelSub /></SetBtn><SetBtn><SelXor /></SetBtn><SetBtn><SelAnd /></SetBtn>
              </SetGroup>
              <Options>Options<Chevron /></Options>
            </ToolRow>
            <Body>
              <Toolbar>
                <ToolGroup $gap={4}>
                  <ToolBtn $h={31} $on $r="4px" $corner><ToolSelect /></ToolBtn>
                  <ToolBtn $h={30} $r="4px"><ToolCursor /></ToolBtn>
                </ToolGroup>
                <ToolGroup>
                  <ToolBtn $h={33} $r="4px 4px 0 0"><ToolMove /></ToolBtn>
                  <ToolBtn $h={33}><ToolRotate /></ToolBtn>
                  <ToolBtn $h={33} $corner><ToolScale /></ToolBtn>
                  <ToolBtn $h={33} $r="0 0 4px 4px"><ToolXform /></ToolBtn>
                </ToolGroup>
                <ToolGroup>
                  <ToolBtn $h={32} $r="4px 4px 0 0" $corner><ToolAnnot /></ToolBtn>
                  <ToolBtn $h={32} $r="0 0 4px 4px"><ToolMeasure /></ToolBtn>
                </ToolGroup>
                <ToolBtn $h={31} $r="4px" $corner><ToolAddCube /></ToolBtn>
              </Toolbar>
              <Info>User Perspective<br />(1) Collection | Cube.004</Info>
              <OverlayCol>
                <Gizmo />
                <NavBtn><Nav1 /></NavBtn>
                <NavBtn><Nav2 /></NavBtn>
                <NavBtn><Nav3 /></NavBtn>
                <NavBtn><Nav4 /></NavBtn>
              </OverlayCol>
              <Sidebar>
                <SideHead><Chevron s={12} c="#cfcfcf" />Transform<GripWrap><Grip /></GripWrap></SideHead>
                <SideLabel $mt={8}>Location:</SideLabel>
                <Vector rows={[["X", "2.3854 m"], ["Y", "1.7711 m"], ["Z", "0.94445 m"]]} />
                <SideLabel $mt={2}>Rotation:</SideLabel>
                <Vector rows={[["X", "0°"], ["Y", "0°"], ["Z", "0°"]]} mt={0.5} />
                <Dropdown>XYZ Euler<Chevron /></Dropdown>
                <SideLabel $mt={2}>Scale:</SideLabel>
                <Vector rows={[["X", "1.000"], ["Y", "0.450"], ["Z", "1.000"]]} mt={0.5} />
                <SideLabel $mt={2.5}>Dimensions:</SideLabel>
                <Vector rows={[["X", "2 m"], ["Y", "0.9 m"], ["Z", "2 m"]]} w={226} lock={false} mt={1.5} />
              </Sidebar>
              <SideTabs>
                <SideTab $h={42} $on>Item</SideTab>
                <SideTab $h={36} $mt={5}>Tool</SideTab>
                <SideTab $h={39} $mt={5}>View</SideTab>
              </SideTabs>
            </Body>
          </Viewport>
          <Timeline>
            <TimeHead>
              <HBtn $w={26}><Clock /><Chevron s={8} /></HBtn>
              <HBtn $w={68} $ml={7} $r="4px 0 0 4px" $gap={6}>Playback<Chevron s={9} /></HBtn>
              <HBtn $w={60} $r="0 4px 4px 0" $gap={6}>Keying<Chevron s={9} /></HBtn>
              <HMenu $ml={3.5}>View</HMenu>
              <HMenu>Marker</HMenu>
              <HBtn $w={17} $ml={171} $bg="#4b4b4b"><I s={12} c="#bbb" vb="0 0 12 12"><circle cx="6" cy="6" r="4.500" /></I></HBtn>
              <HBtn $w={18} $bg="transparent"><Chevron s={7} c="#666" /></HBtn>
              <Transport $ml={8}>
                <I s={13} vb="0 0 14 14"><F c="#e6e6e6" d="M2 2h1.800v10H2zM12 2L5 7l7 5z" /></I>
                <I s={17} vb="0 0 18 14"><F c="#e6e6e6" d="M4 4L.5 7 4 10zM9 3L5.500 7 9 11l3.500-4zM14 4l3.500 3L14 10z" /></I>
                <I s={13} vb="0 0 14 14"><F c="#e6e6e6" d="M12 1L2 7l10 6z" /></I>
                <I s={13} vb="0 0 14 14"><F c="#e6e6e6" d="M2 1l10 6-10 6z" /></I>
                <I s={17} vb="0 0 18 14"><F c="#e6e6e6" d="M1 4l3.500 3L1 10zM10 3L6.500 7 10 11l3.500-4zM17 4l-2.500 3 2.500 3z" /></I>
                <I s={13} vb="0 0 14 14"><F c="#e6e6e6" d="M12 2h-1.800v10H12zM2 2l7 5-7 5z" /></I>
              </Transport>
              <Seg $w={72} $ml={187}>1</Seg>
              <Seg $w={16} $ml={6} $r="4px 0 0 4px" $bg="#3c3c3c"><Stopwatch /></Seg>
              <Seg $w={87} $sb $r="0"><span>Start</span><span>1</span></Seg>
              <Seg $w={83} $sb $r="0 4px 4px 0" $sep><span>End</span><span>250</span></Seg>
            </TimeHead>
            <Ruler>
              <FrameBadge>1</FrameBadge>
              {ticks.map(t => <Tick key={t}>{t}</Tick>)}
            </Ruler>
          </Timeline>
        </LeftCol>

        <RightCol>
          <Outliner>
            <OutHead>
              <HBtn $w={28}><Tree /><Chevron s={8} /></HBtn>
              <HBtn $w={30} $ml={6}><ViewLayerIco /><Chevron s={8} /></HBtn>
              <SearchBox $w={114} $ml={14}><Search />Search</SearchBox>
            </OutHead>
            <OutList>
              <OutRow $pl={20} $fs={11}><RowIcon><CollIco /></RowIcon><RowName>Scene Collection</RowName></OutRow>
              <OutRow $pl={23} $fs={11}><Chevron s={11} /><RowIcon $ml={4} $on><CollIco /></RowIcon><RowName>Collection</RowName><RowEnd><Check><I s={10} c="#222" w={2} vb="0 0 10 10"><path d="M2 5l2.500 2.500L8.500 2.500" /></I></Check><EyeCam /></RowEnd></OutRow>
              <TreeLine />
              {objects.map(o => (
                <OutRow key={o.n} $pl={42}>
                  <ChevronR s={11} />
                  <RowIcon $ml={4} $on={o.on}><MeshObj /></RowIcon>
                  <RowName>{o.n}</RowName>
                  {o.d && <DataSlot><MeshData /></DataSlot>}
                  <RowEnd><EyeCam /></RowEnd>
                </OutRow>
              ))}
            </OutList>
          </Outliner>
          <Props>
            <PropHead>
              <HBtn $w={28}>
                <I s={18} vb="0 0 18 16"><F c="#e0e0e0" d="M3 1.500h12a2.500 2.500 0 0 1 0 5H3a2.500 2.500 0 0 1 0-5zM3 9h12a2.500 2.500 0 0 1 0 5H3a2.500 2.500 0 0 1 0-5z" /><circle cx="12" cy="4" r="1.500" fill="#222" /><circle cx="6" cy="11.500" r="1.500" fill="#222" /></I>
                <Chevron s={8} />
              </HBtn>
              <SearchBox $w={114} $ml={25}><Search />Search</SearchBox>
              <HBtn $w={17} $ml={20} $h={18}><Chevron /></HBtn>
            </PropHead>
            <PropBody>
              <PropTabs>
                {propTabs.map(([Ic, mt, on], i) => <PropTab key={i} $mt={mt} $on={on}><Ic /></PropTab>)}
              </PropTabs>
              <PropMain>
                <Crumb><ObjIco s={16} c="#dcdcdc" />Cube.004<PinEnd><Pin c="#a0a0a0" /></PinEnd></Crumb>
                <NameRow><ObjIco s={16} c="#e6e6e6" /><Chevron s={8} /><NameInput>Cube.004</NameInput></NameRow>
                <Panel $mt={10}>
                  <PanelHead><Chevron s={12} c="#cfcfcf" />Transform<GripWrap $mr={0}><Grip /></GripWrap></PanelHead>
                  <VRow label="Locatio..." value="2.385" first mt={7} />
                  <VRow label="Y" value="1.771" />
                  <VRow label="Z" value="0.944" last />
                  <VRow label="Rotation X" value="0°" first mt={4} />
                  <VRow label="Y" value="0°" />
                  <VRow label="Z" value="0°" last />
                  <PRow $mt={5.5} $h={19}><PLabel>Mode</PLabel><PSelect>XYZ E...<Chevron s={9} /></PSelect><PLock /><Dot /></PRow>
                  <VRow label="Scale X" value="1.000" first mt={4.5} />
                  <VRow label="Y" value="0.450" />
                  <VRow label="Z" value="1.000" last />
                  <SubHead><ChevronR s={11} c="#bdbdbd" />Delta Transform</SubHead>
                </Panel>
                <Panel $mt={2}><PanelHead><ChevronR s={12} c="#bdbdbd" />Relations<GripWrap $mr={0}><Grip /></GripWrap></PanelHead></Panel>
                <Panel $mt={3}><PanelHead><ChevronR s={12} c="#bdbdbd" />Collections<GripWrap $mr={0}><Grip /></GripWrap></PanelHead></Panel>
              </PropMain>
            </PropBody>
          </Props>
        </RightCol>
      </Main>

      <Status>
        <I s={14} h={18} c="#9a9a9a" vb="0 0 14 18"><rect x="1.500" y="1" width="11" height="16" rx="4.500" /><F c="#9a9a9a" d="M2 5.500V4.500A3.500 3.500 0 0 1 6 1.500v4z" /></I>
        <Cancel>Cancel</Cancel>
        <KeyBox>Alt</KeyBox>Axis Snap
        <Version>4.3.0</Version>
      </Status>
    </Page>
  );
}
